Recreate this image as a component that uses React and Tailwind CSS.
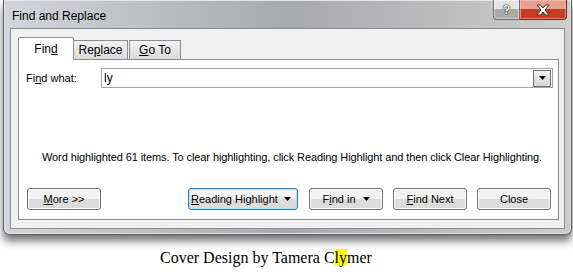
import React from "react";

function Btn({ children, className = "", focused = false, between = false }) {
  return (
    <button
      className={`h-[22px] rounded-[3px] border text-[11px] text-black flex items-center whitespace-nowrap ${
        between ? "justify-between" : "justify-center"
      } ${
        focused
          ? "border-[#3c7fb1] bg-gradient-to-b from-[#f4f4f4] from-50% to-[#dcdcdc] to-50% shadow-[inset_0_0_0_1px_#a8e4fb]"
          : "border-[#707070] bg-gradient-to-b from-[#f2f2f2] from-50% to-[#dcdcdc] to-50% shadow-[inset_0_0_0_1px_#fcfcfc]"
      } ${className}`}
    >
      {children}
    </button>
  );
}

function Caret({ className = "ml-[7px]" }) {
  return (
    <svg width="7" height="4" viewBox="0 0 7 4" className={className}>
      <path d="M0 0h7L3.5 4z" fill="#000" />
    </svg>
  );
}

export default function App() {
  return (
    <div
      className="w-[573px] h-[279px] bg-white overflow-hidden text-[11px]"
      style={{ fontFamily: '"Liberation Sans", Arial, sans-serif' }}
    >
      {/* window */}
      <div className="ml-[3px] w-[569px] h-[235px] rounded-b-[6px] border border-t-0 border-[#5a5a5a] bg-gradient-to-r from-[#d2d5da] via-[#a8a9ab] to-[#cdcdcd] shadow-[0_6px_9px_rgba(0,0,0,0.55),inset_0_0_0_1px_#e6e6e6] flex flex-col">
        {/* title bar */}
        <div className="h-[28px] flex justify-between">
          <span className="pl-[8px] pt-[7px] text-[12px] text-black">Find and Replace</span>
          <div className="flex pr-[4px] h-[20px]">
            <div className="w-[27px] h-[20px] rounded-bl-[4px] border border-t-0 border-[#6b6b6b] bg-gradient-to-b from-[#e2e2e2] from-45% to-[#a9a9a9] to-45% flex items-center justify-center shadow-[inset_0_0_0_1px_rgba(255,255,255,0.5)]">
              <span className="text-white font-bold text-[13px] leading-none [text-shadow:0_0_1px_#222,0_0_1px_#222,0_0_1px_#222]">?</span>
            </div>
            <div className="w-[47px] h-[20px] rounded-br-[4px] border border-t-0 border-l-0 border-[#6b2a20] bg-gradient-to-b from-[#e6a08f] from-45% to-[#c63b22] to-45% flex items-center justify-center shadow-[inset_0_0_0_1px_rgba(255,210,200,0.5)]">
              <svg width="16" height="12" viewBox="0 0 16 12">
                <path
                  d="M2 1h3.5L8 4l2.5-3H14l-4 5 4 5h-3.5L8 8l-2.5 3H2l4-5z"
                  fill="#fff"
                  stroke="#3a3a3a"
                  strokeWidth="1"
                  strokeLinejoin="round"
                />
              </svg>
            </div>
          </div>
        </div>

        {/* client */}
        <div className="mx-[6px] h-[201px] border border-[#8a8d92] bg-[#f0f0f0] flex flex-col">
          {/* tabs */}
          <div className="flex items-end pl-[7px] pt-[8px] h-[30px]">
            <div className="w-[56px] h-[23px] bg-white border border-b-0 border-[#898c95] rounded-t-[2px] flex items-center justify-center relative z-10 -mb-[1px] text-[12px]">
              Fin<span className="underline">d</span>
            </div>
            <div className="w-[55px] h-[19px] -ml-[1px] border border-b-0 border-[#898c95] bg-gradient-to-b from-[#f3f3f3] to-[#d9d9d9] flex items-center justify-center text-[12px]">
              Re<span className="underline">p</span>lace
            </div>
            <div className="w-[52px] h-[19px] ml-[1px] border border-b-0 border-[#898c95] bg-gradient-to-b from-[#f3f3f3] to-[#d9d9d9] flex items-center justify-center text-[12px]">
              <span className="underline">G</span>o To
            </div>
          </div>

          {/* panel */}
          <div className="ml-[7px] w-[541px] h-[161px] bg-white border border-[#898c95] flex flex-col">
            <div className="flex items-center pt-[8px] pl-[7px]">
              <span className="w-[75px]">
                Fi<span className="underline">n</span>d what:
              </span>
              <div className="w-[452px] h-[20px] border border-[#a6a6a6] flex items-center justify-between pl-[2px] pr-[1px]">
                <span className="text-[12px]">ly</span>
                <div className="w-[18px] h-[17px] border border-[#707070] bg-gradient-to-b from-[#f2f2f2] to-[#d4d4d4] flex items-center justify-center">
                  <Caret className="" />
                </div>
              </div>
            </div>

            <p className="mt-[62px] h-[14px] leading-[14px] text-[11px] tracking-[-0.1px] text-center whitespace-nowrap pl-[7px]">
              Word highlighted 61 items. To clear highlighting, click Reading Highlight and then click Clear Highlighting.
            </p>

            <div className="mt-[24px] flex pl-[8px]">
              <Btn className="w-[74px]">
                <span className="underline">M</span>ore &gt;&gt;
              </Btn>
              <Btn focused between className="ml-[87px] w-[110px] pl-[2px] pr-[6px]">
                <span>
                  <span className="underline">R</span>eading Highlight
                </span>
                <Caret className="" />
              </Btn>
              <Btn className="ml-[11px] w-[74px]">
                F<span className="underline">i</span>nd in
                <Caret />
              </Btn>
              <Btn className="ml-[10px] w-[74px]">
                <span className="underline">F</span>ind Next
              </Btn>
              <Btn className="ml-[10px] w-[74px]">Close</Btn>
            </div>
          </div>
        </div>
      </div>

      {/* caption */}
      <div
        className="mt-[15px] ml-[160px] text-[16px] text-black leading-none"
        style={{ fontFamily: '"Liberation Serif", serif' }}
      >
        Cover Design by Tamera C<span className="bg-[#ffff00]">ly</span>mer
      </div>
    </div>
  );
}
